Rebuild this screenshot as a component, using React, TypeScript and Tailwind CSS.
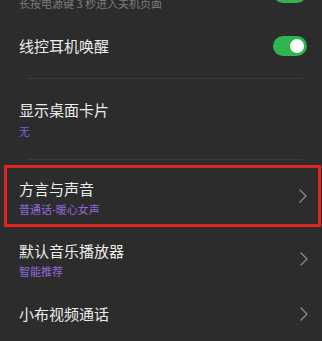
const Toggle = () => (
  <div className="flex h-[20px] w-[34px] items-center justify-end rounded-full bg-[#30b44f] pr-[3px]">
    <div className="h-[14px] w-[14px] rounded-full bg-white" />
  </div>
)

const Chevron = () => (
  <svg width="8" height="14" viewBox="0 0 8 14" fill="none" className="shrink-0">
    <path d="M1 1l6 6-6 6" stroke="#8a8a8a" strokeWidth="1.3" strokeLinecap="round" strokeLinejoin="round" />
  </svg>
)

const Divider = () => <div className="ml-[27px] mr-[19px] h-px bg-[#3a3a3a]" />

export default function App() {
  return (
    <div
      className="h-[341px] w-[322px] overflow-hidden bg-[#2c2c2c]"
      style={{ fontFamily: '"Noto Sans CJK SC", "Noto Sans", sans-serif' }}
    >
      {/* previous row, cut off at top */}
      <div className="-mt-[17px] flex h-[31px] items-start justify-between pl-[19px] pr-[15px]">
        <div className="pt-[13px] text-[11px] leading-[14px] text-[#7c7c7c]">长按电源键 3 秒进入关机页面</div>
        <Toggle />
      </div>

      {/* wired headset wake */}
      <div className="flex h-[64px] items-center justify-between pl-[19px] pr-[15px]">
        <div className="text-[15px] leading-[20px] text-[#ececec]">线控耳机唤醒</div>
        <Toggle />
      </div>

      <Divider />

      {/* desktop card */}
      <div className="flex h-[80px] flex-col justify-center gap-[3px] pl-[19px]">
        <div className="text-[15px] leading-[20px] text-[#ececec]">显示桌面卡片</div>
        <div className="text-[11px] leading-[16px] text-[#7d62d6]">无</div>
      </div>

      <Divider />

      {/* highlighted row */}
      <div className="ml-[4px] mr-[1px] mt-[5px] flex h-[62px] items-center justify-between border-[3px] border-[#e0241d] pl-[12px] pr-[11px]">
        <div className="flex flex-col gap-[2px] pt-[4px]">
          <div className="text-[15px] leading-[20px] text-[#ececec]">方言与声音</div>
          <div className="text-[11px] leading-[16px] text-[#9068dc]">普通话-暖心女声</div>
        </div>
        <Chevron />
      </div>

      <div className="flex h-[64px] items-center justify-between pl-[19px] pr-[14px]">
        <div className="flex flex-col gap-[2px] pt-[2px]">
          <div className="text-[15px] leading-[20px] text-[#ececec]">默认音乐播放器</div>
          <div className="text-[11px] leading-[16px] text-[#9068dc]">智能推荐</div>
        </div>
        <Chevron />
      </div>

      <div className="flex h-[46px] items-center justify-between pl-[19px] pr-[14px]">
        <div className="text-[15px] leading-[20px] text-[#ececec]">小布视频通话</div>
        <Chevron />
      </div>
    </div>
  )
}
